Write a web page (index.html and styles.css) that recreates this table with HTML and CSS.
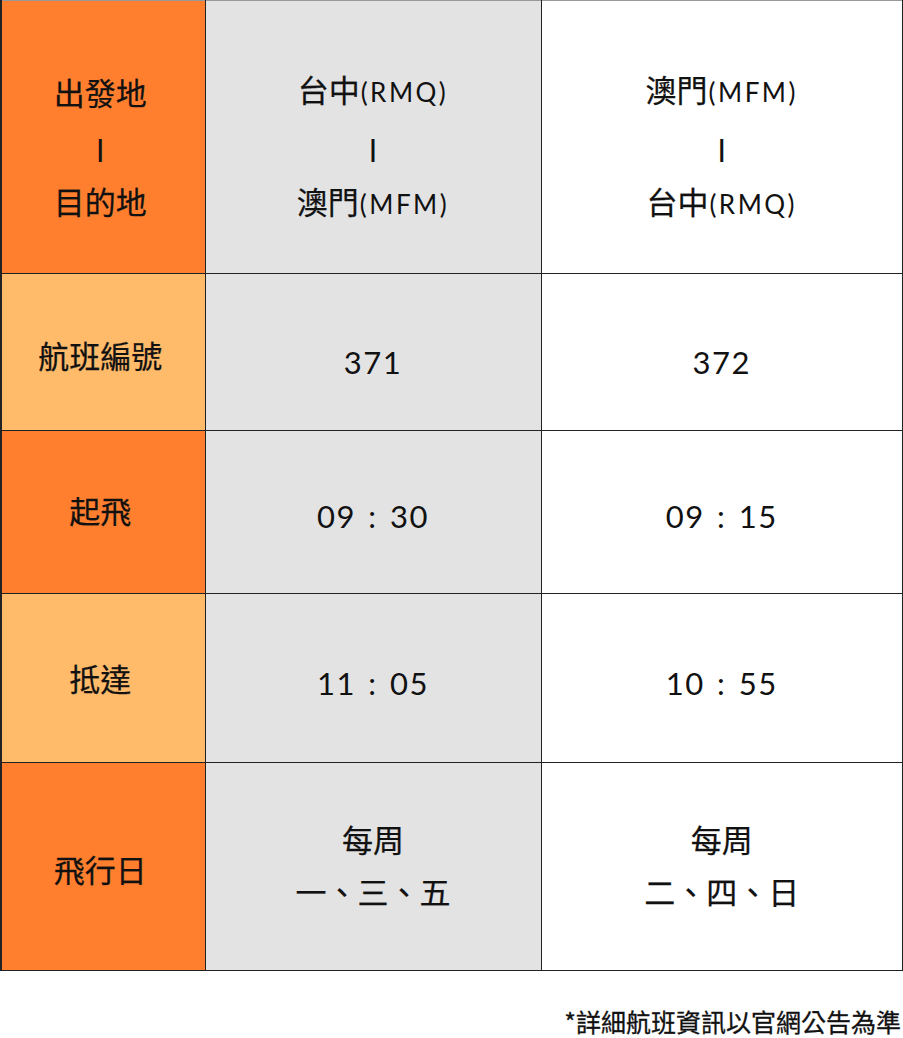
FILE: index.html
```html
<!DOCTYPE html>
<html lang="zh-Hant">
<head>
<meta charset="utf-8">
<link rel="stylesheet" href="styles.css">
</head>
<body>
<table class="sched">
  <colgroup>
    <col class="c1"><col class="c2"><col class="c3">
  </colgroup>
  <tr class="r1">
    <th class="dark">出發地<br><span class="bar">|</span><br>目的地</th>
    <td class="gray">台中<span class="lat">(RMQ)</span><br><span class="bar">|</span><br>澳門<span class="lat">(MFM)</span></td>
    <td class="white">澳門<span class="lat">(MFM)</span><br><span class="bar">|</span><br>台中<span class="lat">(RMQ)</span></td>
  </tr>
  <tr class="r2">
    <th class="light">航班編號</th>
    <td class="gray num">371</td>
    <td class="white num">372</td>
  </tr>
  <tr class="r3">
    <th class="dark">起飛</th>
    <td class="gray num">09 : 30</td>
    <td class="white num">09 : 15</td>
  </tr>
  <tr class="r4">
    <th class="light">抵達</th>
    <td class="gray num">11 : 05</td>
    <td class="white num">10 : 55</td>
  </tr>
  <tr class="r5">
    <th class="dark">飛行日</th>
    <td class="gray">每周<br>一、三、五</td>
    <td class="white">每周<br>二、四、日</td>
  </tr>
</table>
<p class="note">*詳細航班資訊以官網公告為準</p>
</body>
</html>
```

FILE: styles.css
```css
html, body {
  margin: 0;
  padding: 0;
  background: #ffffff;
}
body {
  font-family: "Noto Sans CJK TC", "Noto Sans", sans-serif;
  color: #111;
  width: 903px;
}
.sched {
  border-collapse: collapse;
  width: 902px;
  table-layout: fixed;
  border-left: 2px solid #222;
  border-right: 2px solid #222;
}
.c1 { width: 204px; }
.c2 { width: 336px; }
.c3 { width: 362px; }
.sched th, .sched td {
  border: 1px solid #222;
  text-align: center;
  vertical-align: middle;
  font-size: 31px;
  line-height: 52px;
  font-weight: 400;
  padding: 0;
  color: #111;
  -webkit-text-stroke: 0.25px #111;
}
.sched th { padding-right: 6px; }
.sched tr.r1 th, .sched tr.r1 td { border-top: 1px solid #999; }
.r1 { height: 273px; }
.r2 { height: 157px; }
.r3 { height: 163px; }
.r4 { height: 169px; }
.r5 { height: 208px; }
.r1 th, .r1 td { padding-top: 18px; }
.r2 th { padding-top: 6px; }
.r2 td { padding-top: 20px; }
.r3 th { padding-bottom: 4px; }
.r3 td { padding-top: 8px; }
.r4 td { padding-top: 10px; }
.r5 th { padding-top: 4px; }
.r5 td { padding-bottom: 4px; }
.dark { background: #ff7f2f; }
.light { background: #ffba6a; }
.gray { background: #e3e3e3; }
.white { background: #ffffff; }
.bar {
  font-family: "Liberation Sans", sans-serif;
  font-size: 23px;
  font-weight: 700;
  -webkit-text-stroke: 0;
}
.lat {
  font-family: "Lato", "Liberation Sans", sans-serif;
  font-size: 26px;
  font-weight: 400;
  letter-spacing: 2.5px;
  margin-left: 1px;
  -webkit-text-stroke: 0;
}
.num {
  font-family: "Lato", "Liberation Sans", sans-serif;
  font-size: 32px;
  letter-spacing: 1.5px;
  word-spacing: 3px;
  -webkit-text-stroke: 0 !important;
}
.note {
  margin: 32px 2px 0 0;
  text-align: right;
  font-size: 25px;
  line-height: 36px;
  font-weight: 400;
  color: #111;
  -webkit-text-stroke: 0.3px #111;
}
```
